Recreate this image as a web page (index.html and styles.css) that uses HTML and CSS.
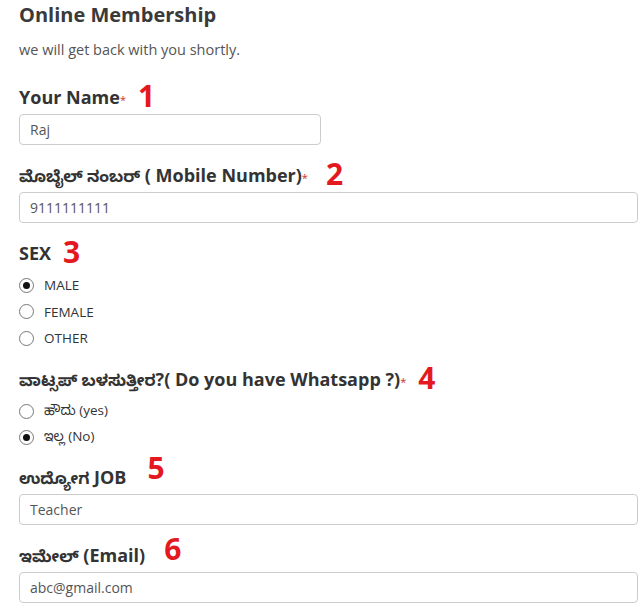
FILE: index.html
```html
<!DOCTYPE html>
<html lang="kn">
<head>
<meta charset="utf-8">
<title>Online Membership</title>
<link rel="stylesheet" href="styles.css">
</head>
<body>
<div class="page">
  <h1 class="title">Online Membership</h1>
  <p class="subtitle">we will get back with you shortly.</p>

  <div class="field">
    <div class="label">Your Name<span class="req">*</span><span class="num">1</span></div>
    <input class="input short" type="text" value="Raj">
  </div>

  <div class="field">
    <div class="label"><span class="kn">ಮೊಬೈಲ್ ನಂಬರ್</span> ( Mobile Number)<span class="req">*</span><span class="num n2">2</span></div>
    <input class="input" type="text" value="9111111111">
  </div>

  <div class="field group sex">
    <div class="label">SEX<span class="num">3</span></div>
    <label class="radio"><input type="radio" name="sex" checked><span>MALE</span></label>
    <label class="radio"><input type="radio" name="sex"><span>FEMALE</span></label>
    <label class="radio"><input type="radio" name="sex"><span>OTHER</span></label>
  </div>

  <div class="field group wa">
    <div class="label"><span class="kn">ವಾಟ್ಸಪ್ ಬಳಸುತ್ತೀರ</span>?( Do you have Whatsapp ?)<span class="req">*</span><span class="num">4</span></div>
    <label class="radio"><input type="radio" name="wa"><span>ಹೌದು (yes)</span></label>
    <label class="radio"><input type="radio" name="wa" checked><span>ಇಲ್ಲ (No)</span></label>
  </div>

  <div class="field">
    <div class="label"><span class="kn">ಉದ್ಯೋಗ</span> JOB<span class="num n5">5</span></div>
    <input class="input" type="text" value="Teacher">
  </div>

  <div class="field">
    <div class="label"><span class="kn">ಇಮೇಲ್</span> (Email)<span class="num n6">6</span></div>
    <input class="input" type="text" value="abc@gmail.com">
  </div>
</div>
</body>
</html>
```

FILE: styles.css
```css
html, body {
  margin: 0;
  padding: 0;
  background: #ffffff;
}

body {
  font-family: "Open Sans", "Noto Sans Kannada", "Lohit Kannada", "Noto Sans", "DejaVu Sans", sans-serif;
  color: #333333;
}

.page {
  padding: 2px 4px 0 19px;
}

.title {
  margin: 0;
  font-size: 20px;
  line-height: 26px;
  font-weight: 700;
  color: #3a3a3a;
}

.subtitle {
  margin: 13px 0 26px;
  font-size: 14.5px;
  line-height: 18px;
  color: #555555;
}

.field {
  margin-bottom: 18px;
}

.field.sex {
  margin-bottom: 15.5px;
}

.field.wa {
  margin-bottom: 14px;
}

.label {
  height: 24px;
  font-size: 18px;
  line-height: 24px;
  font-weight: 700;
  color: #333333;
  margin-bottom: 5px;
  white-space: nowrap;
}

.group .label {
  margin-bottom: 7px;
}

.kn {
  font-size: 16px;
  line-height: 10px;
}

.req {
  color: #c9302c;
  font-size: 11px;
  font-weight: 400;
  vertical-align: 0;
}

.num {
  display: inline-block;
  margin-left: 12px;
  color: #e3191f;
  font-size: 30px;
  line-height: 0;
  font-weight: 700;
  vertical-align: -3px;
}

.n2 { margin-left: 18px; }
.n5 { margin-left: 21px; vertical-align: 5px; }
.n6 { margin-left: 19px; vertical-align: 2px; }

.input {
  display: block;
  box-sizing: border-box;
  width: 100%;
  height: 31px;
  margin: 0;
  padding: 0 10px;
  border: 1px solid #cccccc;
  border-radius: 4px;
  font-family: "Open Sans", sans-serif;
  font-size: 14px;
  color: #555555;
  background: #ffffff;
  outline: none;
}

.input.short {
  width: 302px;
}

.radio {
  display: flex;
  align-items: center;
  height: 26.5px;
  font-size: 13.5px;
  color: #333333;
}

.radio input {
  appearance: none;
  -webkit-appearance: none;
  box-sizing: border-box;
  width: 15px;
  height: 15px;
  margin: 0 10px 0 0;
  border: 1px solid #777777;
  border-radius: 50%;
  background: #ffffff;
  display: flex;
  align-items: center;
  justify-content: center;
}

.radio input:checked::after {
  content: "";
  width: 7px;
  height: 7px;
  border-radius: 50%;
  background: #111111;
}
```
